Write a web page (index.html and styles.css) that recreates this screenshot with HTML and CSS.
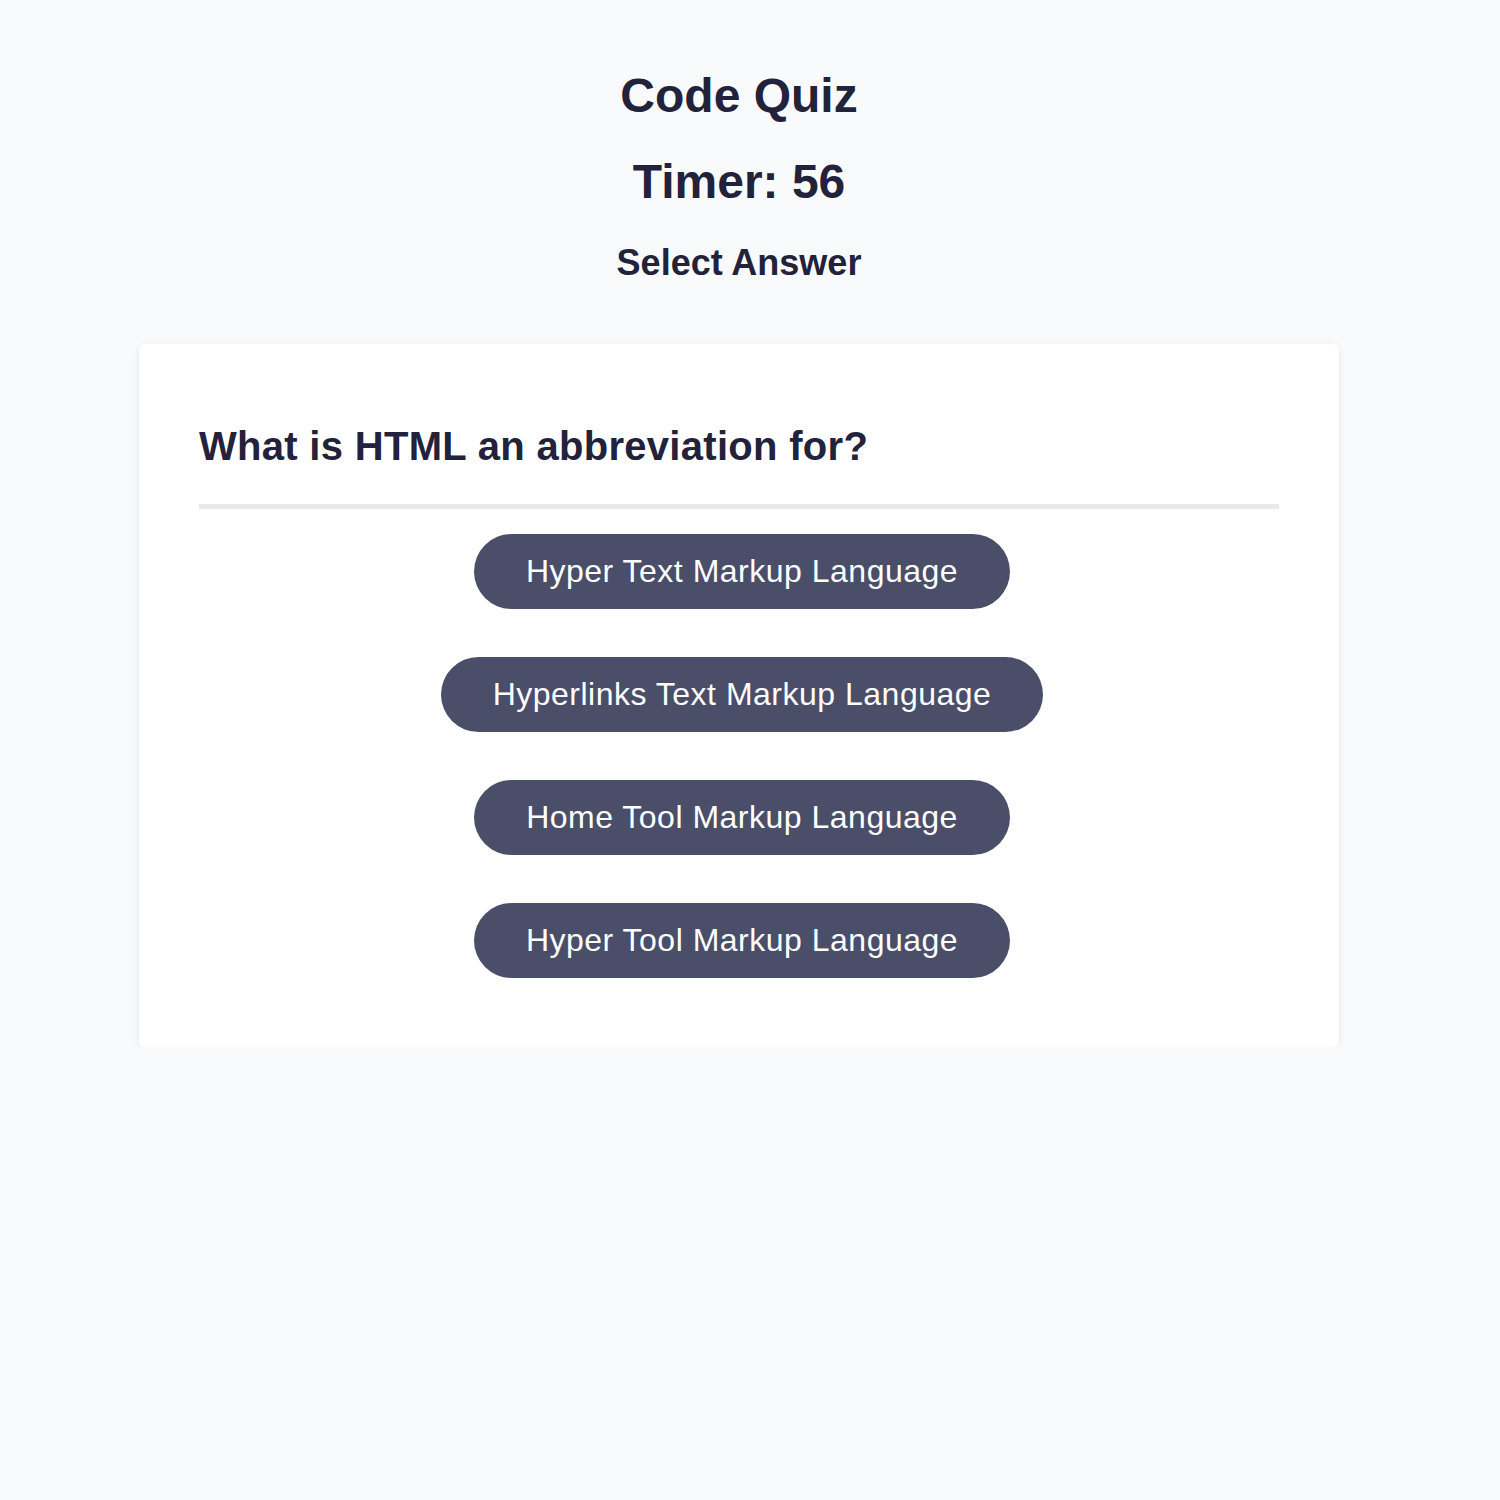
FILE: index.html
```html
<!DOCTYPE html>
<html lang="en">
<head>
<meta charset="utf-8">
<title>Code Quiz</title>
<link rel="stylesheet" href="styles.css">
</head>
<body>
<div class="page">
  <header class="header">
    <h1 class="title">Code Quiz</h1>
    <h1 class="timer">Timer: 56</h1>
    <h2 class="instruction">Select Answer</h2>
  </header>
  <main class="card">
    <h2 class="question">What is HTML an abbreviation for?</h2>
    <div class="divider"></div>
    <div class="answers">
      <button class="answer">Hyper Text Markup Language</button>
      <button class="answer">Hyperlinks Text Markup Language</button>
      <button class="answer">Home Tool Markup Language</button>
      <button class="answer">Hyper Tool Markup Language</button>
    </div>
  </main>
</div>
</body>
</html>
```

FILE: styles.css
```css
html, body {
  margin: 0;
  padding: 0;
  background: #f9fafc;
}

body {
  font-family: "Liberation Sans", Arial, sans-serif;
  color: #22223b;
}

.page {
  width: 1478px;
  display: flex;
  flex-direction: column;
  align-items: center;
  padding-top: 68px;
}

.header {
  display: flex;
  flex-direction: column;
  align-items: center;
  gap: 31px;
}

.title,
.timer {
  margin: 0;
  font-size: 48px;
  font-weight: bold;
  line-height: 55px;
}

.instruction {
  margin: 2px 0 0;
  font-size: 36px;
  font-weight: bold;
  line-height: 41px;
}

.card {
  margin-top: 61px;
  width: 1200px;
  box-sizing: border-box;
  background: #ffffff;
  border-radius: 6px;
  box-shadow: 0 2px 8px rgba(0, 0, 0, 0.08);
  padding: 79px 60px 69px;
}

.question {
  margin: 0;
  font-size: 40px;
  font-weight: bold;
  line-height: 46px;
  letter-spacing: 0.3px;
}

.divider {
  margin-top: 35px;
  height: 5px;
  background: #e9e9e9;
}

.answers {
  margin-top: 25px;
  padding-left: 6px;
  display: flex;
  flex-direction: column;
  align-items: center;
  gap: 48px;
}

.answer {
  border: none;
  background: #4a4e69;
  color: #ffffff;
  font-family: "Liberation Sans", Arial, sans-serif;
  font-size: 32px;
  line-height: 37px;
  letter-spacing: 0.5px;
  padding: 19px 52px;
  border-radius: 40px;
  cursor: pointer;
}
```
